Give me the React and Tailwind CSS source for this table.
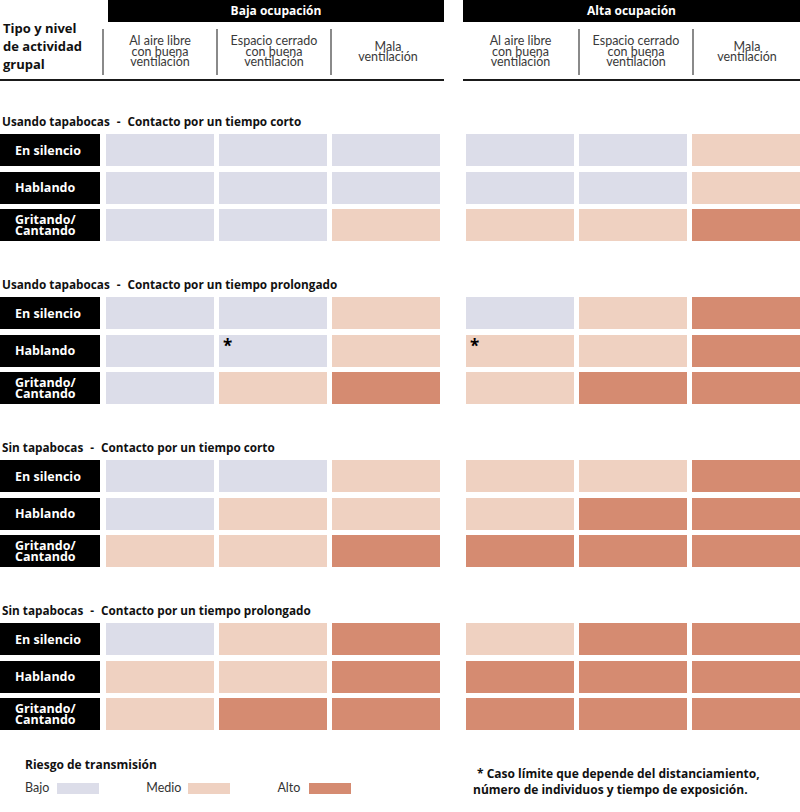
const L = "bg-[#dcdde9]";
const M = "bg-[#efd1c1]";
const H = "bg-[#d58b71]";

const C = { l: L, m: M, h: H };

const BOLD = { fontFamily: "'Open Sans', Lato, sans-serif" };

const sections = [
  {
    title: ["Usando tapabocas", "Contacto por un tiempo corto"],
    rows: [
      ["En silencio", "lll", "llm"],
      ["Hablando", "lll", "llm"],
      ["Gritando/\nCantando", "llm", "mmh"],
    ],
  },
  {
    title: ["Usando tapabocas", "Contacto por un tiempo prolongado"],
    rows: [
      ["En silencio", "llm", "lmh"],
      ["Hablando", "llm", "mmh", true],
      ["Gritando/\nCantando", "lmh", "mhh"],
    ],
  },
  {
    title: ["Sin tapabocas", "Contacto por un tiempo corto"],
    rows: [
      ["En silencio", "llm", "mmh"],
      ["Hablando", "lmm", "mhh"],
      ["Gritando/\nCantando", "mmh", "hhh"],
    ],
  },
  {
    title: ["Sin tapabocas", "Contacto por un tiempo prolongado"],
    rows: [
      ["En silencio", "lmh", "mhh"],
      ["Hablando", "mmh", "hhh"],
      ["Gritando/\nCantando", "mhh", "hhh"],
    ],
  },
];

const Star = () => (
  <span className="absolute left-[4px] top-[2px] text-[17px] font-bold leading-none text-black" style={BOLD}>
    *
  </span>
);

const Cells = ({ codes, starAt }) => (
  <div className="flex gap-[5px]">
    {codes.split("").map((c, i) => (
      <div key={i} className={`relative h-[32px] w-[108px] ${C[c]}`}>
        {starAt === i && <Star />}
      </div>
    ))}
  </div>
);

const Section = ({ title, rows, first }) => (
  <div className={first ? "mt-[32px]" : "mt-[35px]"}>
    <div className="h-[16px] pl-[2px] text-[11.75px] font-bold leading-[16px] text-[#111]" style={BOLD}>
      {title[0]}
      <span className="mx-[7px]">-</span>
      {title[1]}
    </div>
    <div className="mt-[5px] flex flex-col gap-[5.5px]">
      {rows.map(([label, left, right, star]) => (
        <div key={label} className="flex">
          <div
            className="flex h-[32px] w-[100px] items-center whitespace-pre-line bg-black pl-[15px] text-[12.5px] font-bold leading-[11px] text-white"
            style={BOLD}
          >
            {label}
          </div>
          <div className="ml-[6px]">
            <Cells codes={left} starAt={star ? 1 : -1} />
          </div>
          <div className="ml-[26px]">
            <Cells codes={right} starAt={star ? 0 : -1} />
          </div>
        </div>
      ))}
    </div>
  </div>
);

const ColHead = ({ children, border = true, w }) => (
  <div
    className={`flex h-[46px] items-center justify-center text-center text-[12.5px] leading-[10.5px] text-[#3a3a3a] ${w} ${
      border ? "border-l-2 border-[#8a8a8a]" : ""
    }`}
  >
    <span className="whitespace-pre-line">{children}</span>
  </div>
);

export default function App() {
  return (
    <div className="h-[812px] w-[800px] overflow-hidden bg-white" style={{ fontFamily: "Lato, 'Open Sans', sans-serif" }}>
      <div className="flex">
        <div className="flex w-[444px] border-b-2 border-[#1a1a1a]">
          <div className="w-[102px] pl-[3px] pt-[19px] text-[13px] font-bold leading-[18px] text-[#111]" style={BOLD}>
            Tipo y nivel
            <br />
            de actividad
            <br />
            grupal
          </div>
          <div className="flex-1">
            <div className="ml-[6px] flex h-[22px] items-center justify-center bg-black text-[12px] font-bold text-white" style={BOLD}>
              Baja ocupación
            </div>
            <div className="mb-[4px] mt-[7px] flex">
              <ColHead w="w-[114px]">{"Al aire libre\ncon buena\nventilación"}</ColHead>
              <ColHead w="w-[114px]">{"Espacio cerrado\ncon buena\nventilación"}</ColHead>
              <ColHead w="w-[114px]">{"Mala\nventilación"}</ColHead>
            </div>
          </div>
        </div>
        <div className="ml-[19px] w-[337px] border-b-2 border-[#1a1a1a]">
          <div className="flex h-[22px] items-center justify-center bg-black text-[12px] font-bold text-white" style={BOLD}>
            Alta ocupación
          </div>
          <div className="mb-[4px] mt-[7px] flex">
            <ColHead w="w-[115px]" border={false}>{"Al aire libre\ncon buena\nventilación"}</ColHead>
            <ColHead w="w-[114px]">{"Espacio cerrado\ncon buena\nventilación"}</ColHead>
            <ColHead w="w-[108px]">{"Mala\nventilación"}</ColHead>
          </div>
        </div>
      </div>

      {sections.map((s, i) => (
        <Section key={i} title={s.title} rows={s.rows} first={i === 0} />
      ))}

      <div className="mt-[27px] flex">
        <div className="w-[473px] pl-[25px]">
          <div className="text-[12px] font-bold leading-[16px] text-[#111]" style={BOLD}>
            Riesgo de transmisión
          </div>
          <div className="mt-[8px] flex items-center text-[12.5px] leading-[14px] text-[#333]">
            <span>Bajo</span>
            <span className={`ml-[8px] h-[11px] w-[42px] ${L}`} />
            <span className="ml-[47px]">Medio</span>
            <span className={`ml-[7px] h-[11px] w-[42px] ${M}`} />
            <span className="ml-[47px]">Alto</span>
            <span className={`ml-[9px] h-[11px] w-[42px] ${H}`} />
          </div>
        </div>
        <div className="pt-[9px] text-[12px] font-bold leading-[16px] text-[#111]" style={BOLD}>
          <div className="pl-[4px]">* Caso límite que depende del distanciamiento,</div>
          <div>número de individuos y tiempo de exposición.</div>
        </div>
      </div>
    </div>
  );
}
